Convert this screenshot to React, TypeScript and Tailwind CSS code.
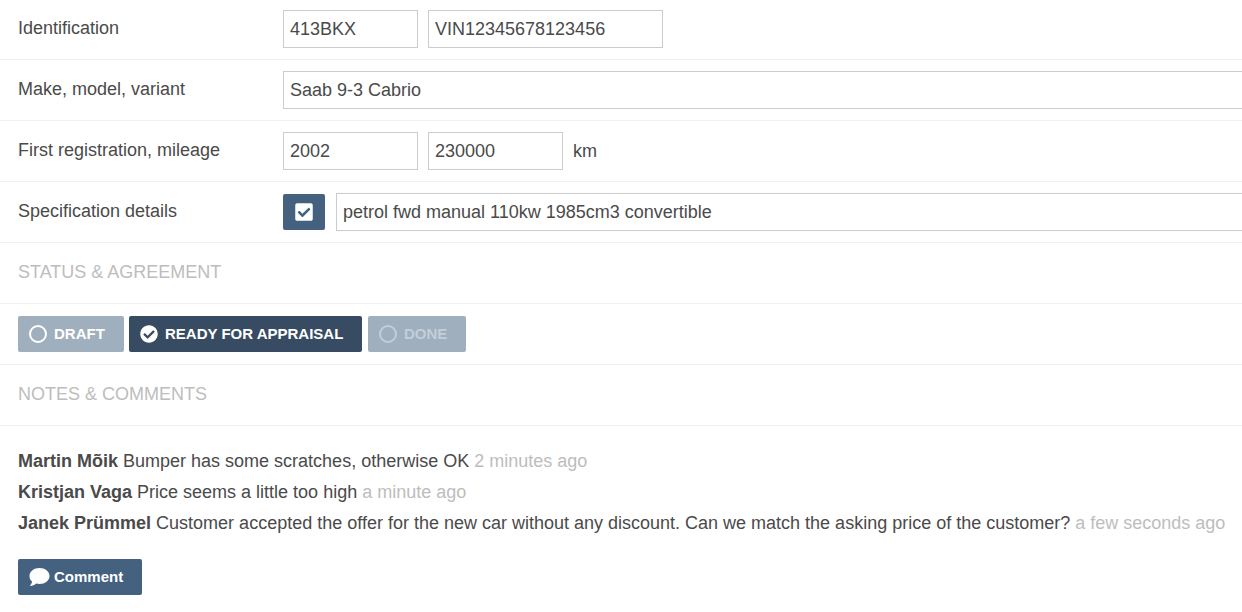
import { FaCheckCircle, FaCheckSquare } from 'react-icons/fa';

const inputClass =
  'h-[38px] border border-[#cccccc] bg-white px-[6px] text-[18px] text-[#4a4a4a] outline-none';

function Row({ label, first, children }: { label: string; first?: boolean; children: React.ReactNode }) {
  return (
    <div className={`flex border-b border-[#edf1f5] pl-[18px] ${first ? 'h-[60px] pt-[10px]' : 'h-[61px] pt-[11px]'}`}>
      <div className="w-[265px] pt-[7px] text-[18px] leading-[22px] text-[#4a4a4a]">{label}</div>
      <div className="flex min-w-0 flex-1 gap-[10px]">{children}</div>
    </div>
  );
}

function Heading({ children }: { children: React.ReactNode }) {
  return (
    <div className="h-[61px] border-b border-[#edf1f5] pl-[18px] pt-[18px] text-[18px] leading-[22px] text-[#bdbdbd]">
      {children}
    </div>
  );
}

function Comment({ author, text, time }: { author: string; text: string; time: string }) {
  return (
    <div className="h-[31px] text-[18px] leading-[31px] text-[#4a4a4a]">
      <strong className="font-bold">{author}</strong> {text} <span className="text-[#bdbdbd]">{time}</span>
    </div>
  );
}

function Ring() {
  return (
    <svg viewBox="0 0 18 18" className="h-[18px] w-[18px] shrink-0" fill="none" stroke="currentColor" strokeWidth="2">
      <circle cx="9" cy="9" r="8" />
    </svg>
  );
}

function Bubble() {
  return (
    <svg viewBox="0 0 21 18" className="h-[18px] w-[21px] shrink-0" fill="currentColor">
      <path d="M10.5 0C16 0 20.500 3.500 20.500 8S16 16 10.500 16c-1.200 0-2.300-.2-3.300-.5C5.800 17 3.500 18 .8 18c1-1 2-2.500 2.300-4.400C1.200 12.200.5 10.200.5 8 .5 3.500 5 0 10.500 0z" />
    </svg>
  );
}

export default function App() {
  return (
    <div className="h-[612px] w-[1242px] overflow-hidden bg-white font-['Liberation_Sans',Arial,sans-serif]">
      <div className="w-[1270px]">
        <Row label="Identification" first>
          <input className={`${inputClass} w-[135px]`} defaultValue="413BKX" />
          <input className={`${inputClass} w-[235px]`} defaultValue="VIN12345678123456" />
        </Row>
        <Row label="Make, model, variant">
          <input className={`${inputClass} w-full`} defaultValue="Saab 9-3 Cabrio" />
        </Row>
        <Row label="First registration, mileage">
          <input className={`${inputClass} w-[135px]`} defaultValue="2002" />
          <input className={`${inputClass} w-[135px]`} defaultValue="230000" />
          <span className="pt-[8px] text-[18px] leading-[22px] text-[#4a4a4a]">km</span>
        </Row>
        <Row label="Specification details">
          <button className="mt-px flex h-[36px] w-[42px] shrink-0 items-center justify-center rounded-[2px] bg-[#44627f] text-white">
            <FaCheckSquare className="h-[20px] w-[18px]" />
          </button>
          <input className={`${inputClass} ml-px min-w-0 flex-1`} defaultValue="petrol fwd manual 110kw 1985cm3 convertible" />
        </Row>
        <Heading>STATUS &amp; AGREEMENT</Heading>
        <div className="flex h-[61px] gap-[5px] border-b border-[#edf1f5] pl-[18px] pt-[12px]">
          <div className="flex h-[36px] w-[106px] items-center gap-[7px] rounded-[2px] bg-[#9fafbd] pl-[11px] text-[15px] font-bold text-white">
            <Ring />
            DRAFT
          </div>
          <div className="flex h-[36px] w-[233px] items-center gap-[7px] rounded-[2px] bg-[#374c63] pl-[11px] text-[15px] font-bold text-white">
            <FaCheckCircle className="h-[18px] w-[18px]" />
            READY FOR APPRAISAL
          </div>
          <div className="ml-px flex h-[36px] w-[98px] items-center gap-[7px] rounded-[2px] bg-[#9fafbd] pl-[11px] text-[15px] font-bold text-[#c3ced8]">
            <Ring />
            DONE
          </div>
        </div>
        <Heading>NOTES &amp; COMMENTS</Heading>
        <div className="pl-[18px] pt-[20px]">
          <Comment author="Martin Mõik" text="Bumper has some scratches, otherwise OK" time="2 minutes ago" />
          <Comment author="Kristjan Vaga" text="Price seems a little too high" time="a minute ago" />
          <Comment
            author="Janek Prümmel"
            text="Customer accepted the offer for the new car without any discount. Can we match the asking price of the customer?"
            time="a few seconds ago"
          />
          <button className="mt-[20px] flex h-[36px] w-[124px] items-center gap-[4px] rounded-[2px] bg-[#44627f] pl-[11px] text-[15px] font-bold text-white">
            <Bubble />
            Comment
          </button>
        </div>
      </div>
    </div>
  );
}
